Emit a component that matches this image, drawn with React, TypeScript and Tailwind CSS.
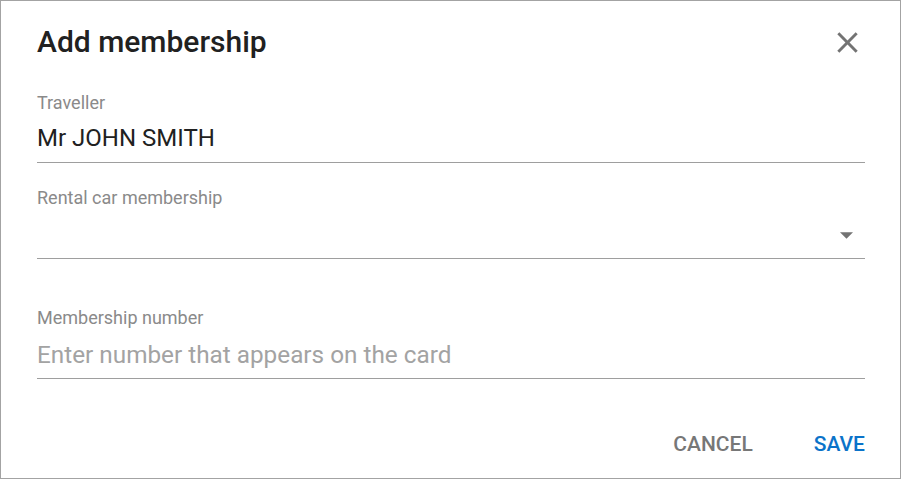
import React from "react";

export default function App() {
  return (
    <div className="w-[902px] h-[480px] bg-white" style={{ fontFamily: "Roboto, 'Liberation Sans', sans-serif" }}>
      <div className="w-[901px] h-[479px] border border-[#a3a3a3] box-border flex flex-col pl-[36px] pr-[35px]">
        <div className="flex items-center justify-between h-[82px] shrink-0">
          <h1 className="text-[30px] font-medium text-[#212121] leading-none">Add membership</h1>
          <button className="w-[35px] h-[35px] flex items-center justify-center">
            <svg width="35" height="35" viewBox="0 0 24 24">
              <path d="M19 6.41L17.59 5 12 10.59 6.41 5 5 6.41 10.59 12 5 17.59 6.41 19 12 13.41 17.59 19 19 17.59 13.41 12z" fill="#737373" />
            </svg>
          </button>
        </div>
        <div className="flex flex-col mt-[10px]">
          <label className="text-[18px] leading-[20px] text-[#8a8a8a]">Traveller</label>
          <div className="text-[24px] leading-[28px] text-[#212121] mt-[11px] pb-[10px] border-b border-[#9e9e9e]">Mr JOHN SMITH</div>
        </div>
        <div className="flex flex-col mt-[25px]">
          <label className="text-[18px] leading-[20px] text-[#8a8a8a]">Rental car membership</label>
          <div className="h-[51px] flex items-center justify-end border-b border-[#9e9e9e] pr-[12px] pt-[4px]">
            <svg width="13" height="7" viewBox="0 0 13 7"><path d="M0 0.2 L13 0.2 L6.5 6.8 Z" fill="#737373" /></svg>
          </div>
        </div>
        <div className="flex flex-col mt-[49px]">
          <label className="text-[18px] leading-[20px] text-[#8a8a8a]">Membership number</label>
          <div className="text-[24.3px] leading-[28px] text-[#a3a3a3] mt-[13px] pb-[9px] border-b border-[#9e9e9e]">Enter number that appears on the card</div>
        </div>
        <div className="flex justify-end items-center mt-[55px] gap-[61px]">
          <button className="text-[21px] leading-none font-medium text-[#777777]">CANCEL</button>
          <button className="text-[21px] leading-none font-medium text-[#0b73c9]">SAVE</button>
        </div>
      </div>
    </div>
  );
}
